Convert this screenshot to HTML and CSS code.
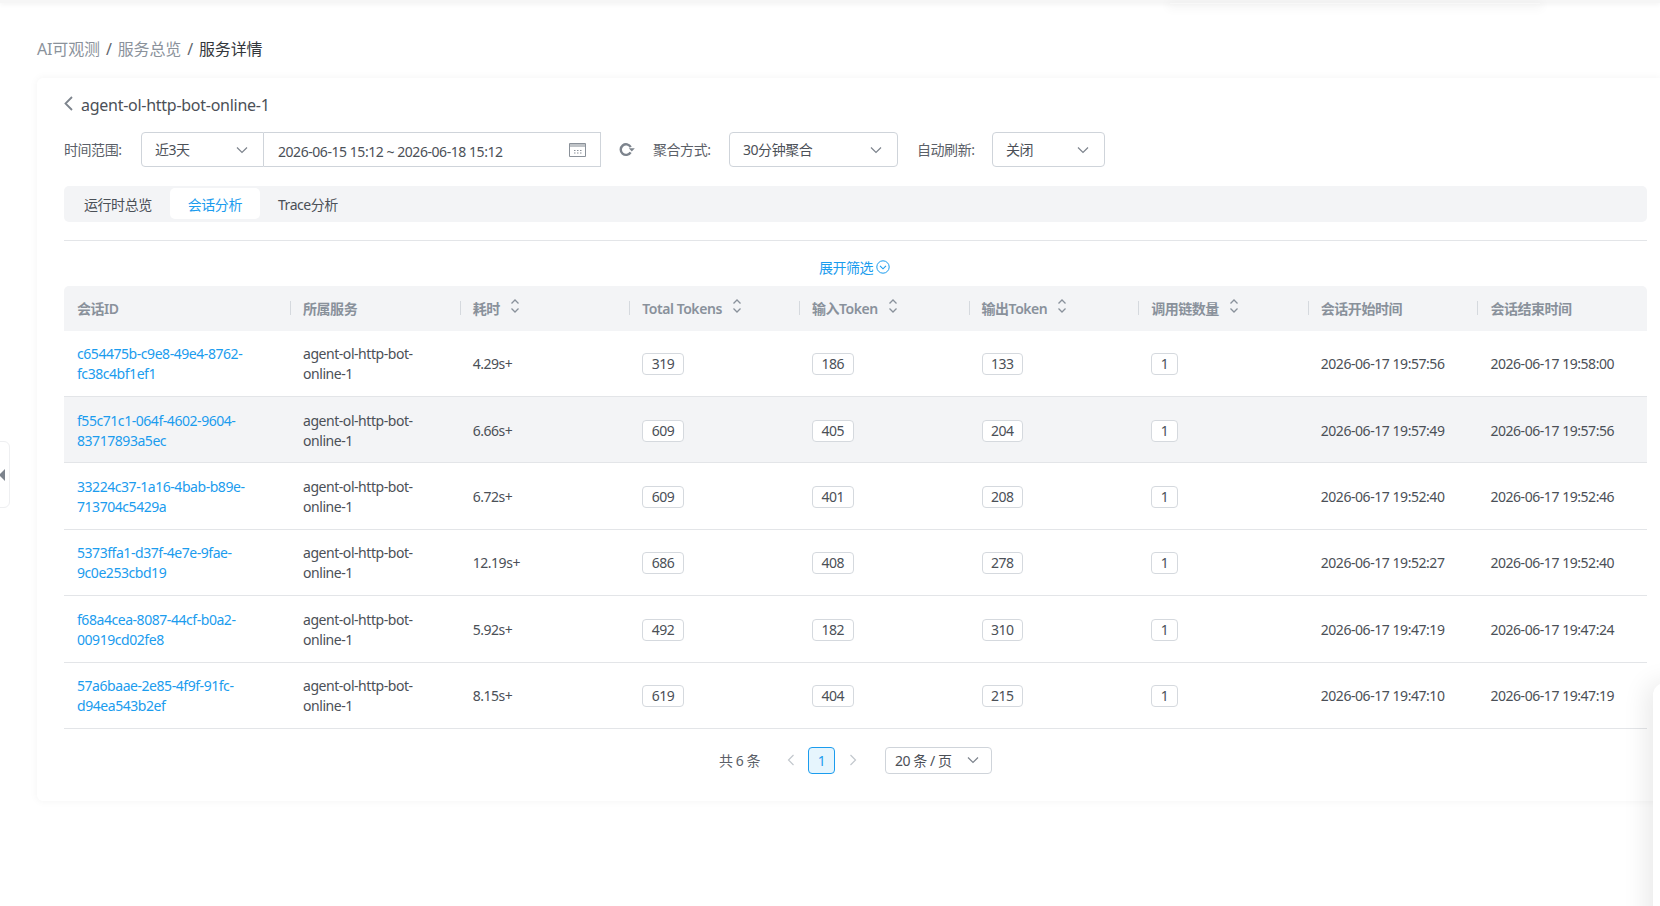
FILE: index.html
```html
<!DOCTYPE html>
<html>
<head>
    <title>服务详情</title>
    <link rel="stylesheet" href="styles.css">
</head>
<body>
    <svg class="sprite" width="0" height="0">
        <symbol id="chevron-down" viewBox="0 0 12 8"><path d="M1 1.500 6 6.500 11 1.500" fill="none" stroke="currentColor" stroke-width="1.200"/></symbol>
        <symbol id="sort" viewBox="0 0 10 14"><path d="M1.500 4.500 5 1 8.500 4.500M1.500 9.500 5 13 8.500 9.500" fill="none" stroke="currentColor" stroke-width="1.300"/></symbol>
    </svg>

    <div class="topbar"></div>
    <div class="topbar-glow"></div>

    <div class="side-handle"><span class="side-arrow"></span></div>
    <div class="right-panel"></div>

    <div class="page">
        <div class="breadcrumb">
            <span>AI可观测</span><span class="sep">/</span><span>服务总览</span><span class="sep">/</span><span class="current">服务详情</span>
        </div>

        <div class="card">
            <div class="title-row">
                <svg class="back-icon" viewBox="0 0 9 15"><path d="M8 1 1.500 7.500 8 14" fill="none" stroke="currentColor" stroke-width="1.800"/></svg>
                <span>agent-ol-http-bot-online-1</span>
            </div>

            <div class="toolbar">
                <span class="label label-time">时间范围:</span>
                <div class="select select-range">近3天<svg class="arrow"><use href="#chevron-down"/></svg></div>
                <div class="date-range">
                    <span>2026-06-15 15:12 ~ 2026-06-18 15:12</span>
                    <svg class="calendar" viewBox="0 0 17 14"><path d="M.5.500h16v13H.500z" fill="none" stroke="currentColor"/><path d="M1 1h15v3H1z" fill="currentColor" opacity=".55"/><path d="M5 7.500h1.500M8 7.500h1.500M11 7.500h1.500M5 10h1.500M8 10h1.500M11 10h1.500" stroke="currentColor"/></svg>
                </div>
                <svg class="refresh" viewBox="0 0 16 15"><path d="M11.700 5.100A5.300 5.300 0 1 0 11.600 10.300" fill="none" stroke="currentColor" stroke-width="2.400"/><path d="M9.800 6.200h6L12.800 9.600z" fill="currentColor"/></svg>
                <span class="label label-agg">聚合方式:</span>
                <div class="select select-agg">30分钟聚合<svg class="arrow"><use href="#chevron-down"/></svg></div>
                <span class="label label-auto">自动刷新:</span>
                <div class="select select-auto">关闭<svg class="arrow"><use href="#chevron-down"/></svg></div>
            </div>

            <div class="tabs">
                <div class="tab tab-first">运行时总览</div>
                <div class="tab active">会话分析</div>
                <div class="tab">Trace分析</div>
            </div>
            <div class="divider"></div>

            <div class="expand-filter">
                <span>展开筛选</span>
                <svg class="expand-icon" viewBox="0 0 14 14"><circle cx="7" cy="7" r="6.200" fill="none" stroke="currentColor"/><path d="M4 5.800 7 8.800 10 5.800" fill="none" stroke="currentColor" stroke-width="1.100"/></svg>
            </div>

            <table class="session-table">
                <colgroup>
                    <col class="col-id">
                    <col><col><col><col><col><col><col><col>
                </colgroup>
                <thead>
                    <tr>
                        <th><div class="th-first">会话ID</div></th>
                        <th><div class="th-cell">所属服务</div></th>
                        <th><div class="th-cell">耗时<svg class="sort"><use href="#sort"/></svg></div></th>
                        <th><div class="th-cell">Total Tokens<svg class="sort"><use href="#sort"/></svg></div></th>
                        <th><div class="th-cell">输入Token<svg class="sort"><use href="#sort"/></svg></div></th>
                        <th><div class="th-cell">输出Token<svg class="sort"><use href="#sort"/></svg></div></th>
                        <th><div class="th-cell">调用链数量<svg class="sort"><use href="#sort"/></svg></div></th>
                        <th><div class="th-cell">会话开始时间</div></th>
                        <th><div class="th-cell">会话结束时间</div></th>
                    </tr>
                </thead>
                <tbody>
                    <tr>
                        <td><a class="link">c654475b-c9e8-49e4-8762-fc38c4bf1ef1</a></td>
                        <td>agent-ol-http-bot-online-1</td>
                        <td>4.29s+</td>
                        <td><span class="tag">319</span></td>
                        <td><span class="tag">186</span></td>
                        <td><span class="tag">133</span></td>
                        <td><span class="tag">1</span></td>
                        <td>2026-06-17 19:57:56</td>
                        <td>2026-06-17 19:58:00</td>
                    </tr>
                    <tr class="hover">
                        <td><a class="link">f55c71c1-064f-4602-9604-83717893a5ec</a></td>
                        <td>agent-ol-http-bot-online-1</td>
                        <td>6.66s+</td>
                        <td><span class="tag">609</span></td>
                        <td><span class="tag">405</span></td>
                        <td><span class="tag">204</span></td>
                        <td><span class="tag">1</span></td>
                        <td>2026-06-17 19:57:49</td>
                        <td>2026-06-17 19:57:56</td>
                    </tr>
                    <tr>
                        <td><a class="link">33224c37-1a16-4bab-b89e-713704c5429a</a></td>
                        <td>agent-ol-http-bot-online-1</td>
                        <td>6.72s+</td>
                        <td><span class="tag">609</span></td>
                        <td><span class="tag">401</span></td>
                        <td><span class="tag">208</span></td>
                        <td><span class="tag">1</span></td>
                        <td>2026-06-17 19:52:40</td>
                        <td>2026-06-17 19:52:46</td>
                    </tr>
                    <tr>
                        <td><a class="link">5373ffa1-d37f-4e7e-9fae-9c0e253cbd19</a></td>
                        <td>agent-ol-http-bot-online-1</td>
                        <td>12.19s+</td>
                        <td><span class="tag">686</span></td>
                        <td><span class="tag">408</span></td>
                        <td><span class="tag">278</span></td>
                        <td><span class="tag">1</span></td>
                        <td>2026-06-17 19:52:27</td>
                        <td>2026-06-17 19:52:40</td>
                    </tr>
                    <tr>
                        <td><a class="link">f68a4cea-8087-44cf-b0a2-00919cd02fe8</a></td>
                        <td>agent-ol-http-bot-online-1</td>
                        <td>5.92s+</td>
                        <td><span class="tag">492</span></td>
                        <td><span class="tag">182</span></td>
                        <td><span class="tag">310</span></td>
                        <td><span class="tag">1</span></td>
                        <td>2026-06-17 19:47:19</td>
                        <td>2026-06-17 19:47:24</td>
                    </tr>
                    <tr>
                        <td><a class="link">57a6baae-2e85-4f9f-91fc-d94ea543b2ef</a></td>
                        <td>agent-ol-http-bot-online-1</td>
                        <td>8.15s+</td>
                        <td><span class="tag">619</span></td>
                        <td><span class="tag">404</span></td>
                        <td><span class="tag">215</span></td>
                        <td><span class="tag">1</span></td>
                        <td>2026-06-17 19:47:10</td>
                        <td>2026-06-17 19:47:19</td>
                    </tr>
                </tbody>
            </table>

            <div class="pagination">
                <span class="total">共 6 条</span>
                <svg class="page-arrow arrow-prev" viewBox="0 0 8 12"><path d="M6.500 1 1.500 6 6.500 11" fill="none" stroke="currentColor" stroke-width="1.200"/></svg>
                <span class="page-num">1</span>
                <svg class="page-arrow arrow-next" viewBox="0 0 8 12"><path d="M1.500 1 6.500 6 1.500 11" fill="none" stroke="currentColor" stroke-width="1.200"/></svg>
                <div class="page-size">20 条 / 页<svg class="arrow"><use href="#chevron-down"/></svg></div>
            </div>
        </div>
    </div>
</body>
</html>
```

FILE: styles.css
```css
/* page frame */
* {
    box-sizing: border-box;
}
html, body {
    height: 100%;
}
body {
    margin: 0;
    overflow: hidden;
    position: relative;
    background-color: #fff;
    color: #4b5057;
    font-family: "Noto Sans", "Noto Sans CJK SC", sans-serif;
    font-size: 14px;
    letter-spacing: -0.45px;
}
.sprite {
    position: absolute;
}
.topbar {
    height: 3px;
    background-color: #f6f6f6;
    box-shadow: 0 1px 5px rgba(0, 0, 0, 0.07);
}
.topbar-glow {
    position: absolute;
    top: 3px;
    left: 1170px;
    width: 370px;
    height: 1px;
    box-shadow: 0 2px 10px 3px rgba(0, 0, 0, 0.04);
}
.side-handle {
    position: absolute;
    top: 441px;
    left: -10px;
    width: 20px;
    height: 67px;
    display: flex;
    align-items: center;
    justify-content: flex-end;
    padding-right: 4px;
    background-color: #fff;
    border: 1px solid #eeeff1;
    border-radius: 6px;
    z-index: 2;
}
.side-arrow {
    width: 0;
    height: 0;
    border-top: 6px solid transparent;
    border-bottom: 6px solid transparent;
    border-right: 6px solid #7d848d;
}
.right-panel {
    position: absolute;
    top: 683px;
    left: 1653px;
    width: 60px;
    height: 300px;
    background-color: #fff;
    border-radius: 12px 0 0 0;
    box-shadow: -6px 0 26px rgba(0, 0, 0, 0.09);
    z-index: 2;
}
.page {
    padding-left: 37px;
}

/* breadcrumb */
.breadcrumb {
    height: 75px;
    padding-top: 34px;
    font-size: 16px;
    line-height: 24px;
    letter-spacing: -0.15px;
    color: #8b929b;
}
.breadcrumb .sep {
    margin: 0 6px;
    color: #5f656c;
}
.breadcrumb .current {
    color: #33373c;
}

/* card */
.card {
    height: 723px;
    padding: 0 13px 0 27px;
    background-color: #fff;
    border-radius: 6px 0 0 6px;
    box-shadow: 0 0 8px rgba(0, 0, 0, 0.05);
}
.title-row {
    height: 54px;
    display: flex;
    align-items: center;
    font-size: 16px;
    letter-spacing: -0.27px;
}
.back-icon {
    width: 9px;
    height: 15px;
    margin: -4px 8px 0 0;
    color: #7d848d;
}

/* toolbar */
.toolbar {
    height: 35px;
    display: flex;
    align-items: center;
    line-height: 20px;
}
.label {
    white-space: nowrap;
    color: #5b6068;
}
.label-time {
    width: 77px;
}
.select {
    height: 35px;
    display: flex;
    align-items: center;
    justify-content: space-between;
    padding: 0 15px 0 13px;
    background-color: #fff;
    border: 1px solid #cfd4da;
    border-radius: 4px;
}
.arrow {
    width: 12px;
    height: 8px;
    color: #7d848d;
}
.select-range {
    width: 123px;
    border-radius: 4px 0 0 4px;
}
.date-range {
    width: 337px;
    height: 35px;
    display: flex;
    align-items: center;
    justify-content: space-between;
    padding: 5px 14px 0 14px;
    border: 1px solid #cfd4da;
    border-left: none;
}
.calendar {
    width: 17px;
    height: 14px;
    margin-top: -5px;
    color: #8a9199;
}
.refresh {
    width: 16px;
    height: 15px;
    margin: 0 18px;
    color: #7d848d;
}
.label-agg {
    width: 76px;
}
.select-agg {
    width: 169px;
}
.label-auto {
    width: 75px;
    margin-left: 19px;
}
.select-auto {
    width: 113px;
}

/* tabs */
.tabs {
    height: 36px;
    margin-top: 19px;
    display: flex;
    padding: 2px 3px;
    background-color: #f3f4f6;
    border-radius: 5px;
}
.tab {
    padding: 0 18px 0 18px;
    line-height: 33px;
    border-radius: 5px;
}
.tab-first {
    padding: 0 18px 0 17px;
}
.tab.active {
    height: 31px;
    background-color: #fff;
    color: #1b9cee;
}
.divider {
    height: 1px;
    margin-top: 18px;
    background-color: #e3e5e8;
}
.expand-filter {
    height: 45px;
    display: flex;
    align-items: center;
    justify-content: center;
    gap: 3px;
    padding: 7px 2px 0 0;
    color: #1b9cee;
}
.expand-icon {
    width: 14px;
    height: 14px;
}

/* table */
.session-table {
    width: 100%;
    table-layout: fixed;
    border-collapse: separate;
    border-spacing: 0;
}
.col-id {
    width: 226px;
}
.session-table th {
    height: 44.6px;
    padding: 0;
    background-color: #f3f4f6;
    font-weight: 600;
    text-align: left;
    color: #89919b;
}
.session-table th:first-child {
    border-radius: 5px 0 0 0;
}
.session-table th:last-child {
    border-radius: 0 5px 0 0;
}
.th-first {
    padding: 2px 0 0 13px;
    line-height: 20px;
}
.th-cell {
    display: flex;
    align-items: center;
    height: 14px;
    padding: 2px 0 0 12px;
    line-height: 20px;
    border-left: 1px solid #d5d9de;
    white-space: nowrap;
}
.sort {
    width: 10px;
    height: 14px;
    margin: -6px 0 0 10px;
    color: #89919b;
}
.session-table td {
    height: 66.4px;
    padding: 2px 13px 0;
    line-height: 20px;
    border-bottom: 1px solid #e3e5e8;
}
.session-table tr.hover td {
    background-color: #f3f4f6;
}
.link {
    color: #1b9cee;
}
.tag {
    display: inline-block;
    height: 22px;
    padding: 0 8.5px;
    line-height: 20px;
    background-color: #fff;
    border: 1px solid #d5d9de;
    border-radius: 4px;
}

/* pagination */
.pagination {
    height: 27px;
    margin-top: 18px;
    display: flex;
    align-items: center;
    padding-left: 655px;
}
.total {
    width: 68px;
    color: #5b6068;
}
.page-arrow {
    width: 8px;
    height: 12px;
    color: #c2c7cd;
}
.page-num {
    width: 27px;
    height: 27px;
    margin: 0 14px 0 13px;
    text-align: center;
    line-height: 25px;
    color: #1b9cee;
    background-color: #e6f5fd;
    border: 1px solid #1b9cee;
    border-radius: 4px;
}
.page-size {
    width: 107px;
    height: 27px;
    margin-left: 28px;
    display: flex;
    align-items: center;
    justify-content: space-between;
    padding: 0 12px 0 9px;
    border: 1px solid #cfd4da;
    border-radius: 4px;
}
```
